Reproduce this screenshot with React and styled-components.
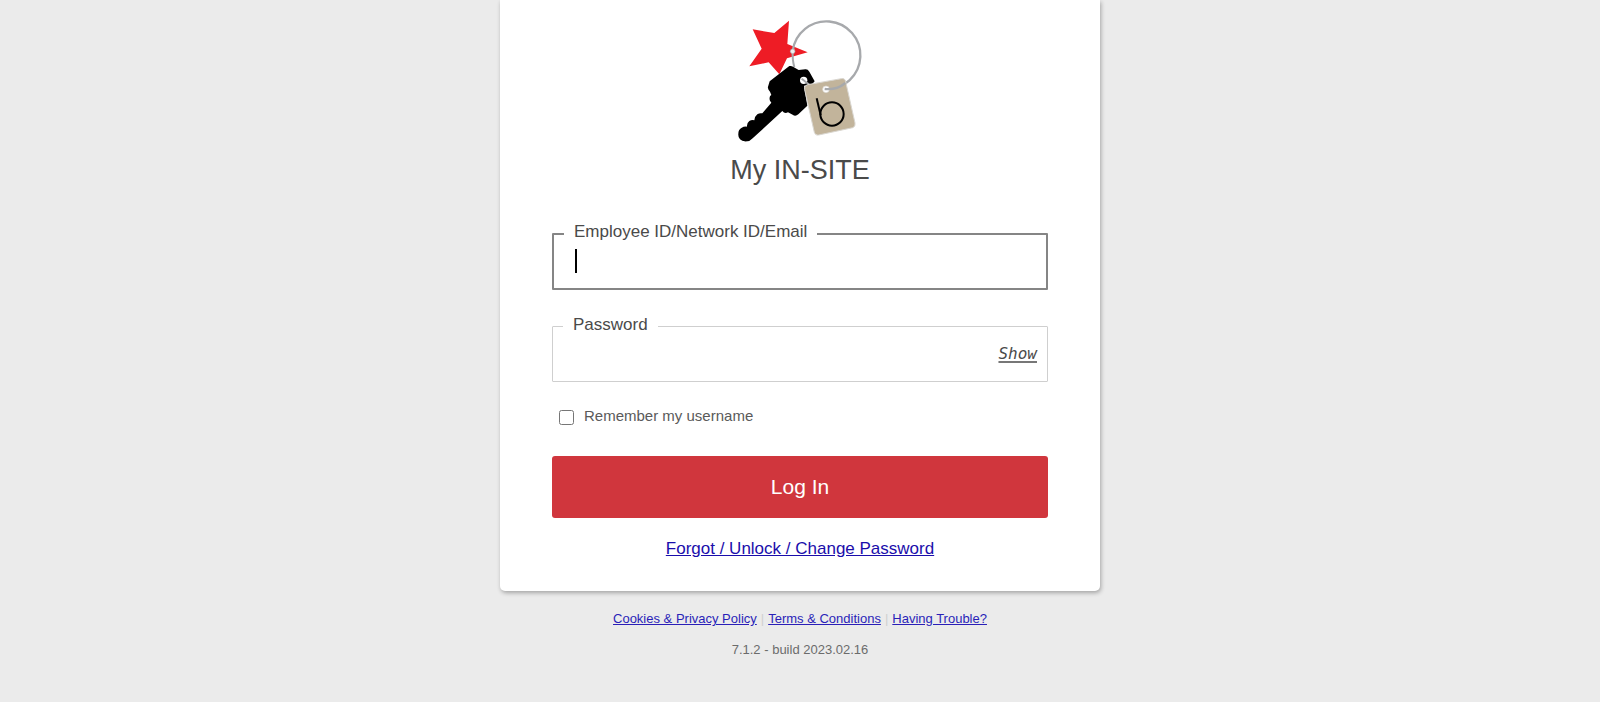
import React, { useState } from "react";
import styled, { createGlobalStyle } from "styled-components";

const GlobalStyle = createGlobalStyle`
  * {
    box-sizing: border-box;
  }
  body {
    margin: 0;
    background: #ebebeb;
    font-family: Arial, "Liberation Sans", sans-serif;
    color: #4a4a4a;
  }
`;

const footerLinks = ["Cookies & Privacy Policy", "Terms & Conditions", "Having Trouble?"];

function KeyringLogo() {
  return (
    <svg width="130" height="126" viewBox="45 53 390 378" role="img" aria-label="Star, key and tag on a key ring">
      <path
        d="M207 61 L202 131 L263 156 L201 174 L178 222 L146 186 L88 198 L125 145 L98 87 L163 98 Z"
        fill="#ee1c25"
      />
      <path d="M218 152 A102 102 0 1 1 318 267" fill="none" stroke="#a7a9ac" strokeWidth="7" />
      <path d="M218 152 Q217 180 223 200" fill="none" stroke="#a7a9ac" strokeWidth="6" />
      <path
        d="M208 197 Q215 196 219 199 L236 209 L256 207 Q263 206 268 214 L284 243 L276 252 L252 256 L262 316 L235 342 Q226 350 218 343 L204 336 Q194 342 187 332 L98 414 Q88 424 81 423 Q66 424 60 417 Q54 411 55 400 Q55 388 64 383 Q72 378 81 379 Q80 368 88 362 Q95 358 103 360 Q104 348 112 342 Q119 337 127 339 L154 307 Q147 300 149 293 Q148 287 154 284 L150 274 Q142 266 144 259 L149 243 Z"
        fill="#000"
      />
      <circle cx="251" cy="240" r="11" fill="#fff" />
      <path d="M245 235 L268 253" fill="none" stroke="#a7a9ac" strokeWidth="6" />
      <path
        d="M263 253 L364 235 Q375 233 377 244 L405 368 Q407 379 398 382 L296 404 Q286 406 283 396 L254 268 Q252 256 263 253 Z"
        fill="#c2b49b"
        stroke="#d9d6d0"
        strokeWidth="3"
      />
      <circle cx="318" cy="267" r="10" fill="#fff" stroke="#d9d6d0" strokeWidth="2" />
      <path d="M314 266 Q350 270 376 248" fill="none" stroke="#a7a9ac" strokeWidth="7" />
      <path d="M290 294 L302 345" fill="none" stroke="#000" strokeWidth="6" />
      <circle cx="336" cy="341" r="35" fill="none" stroke="#000" strokeWidth="6" />
      <circle cx="218" cy="153" r="7" fill="#eee" stroke="#a7a9ac" strokeWidth="2" />
    </svg>
  );
}

export default function App() {
  const [visible, setVisible] = useState(false);
  return (
    <>
      <GlobalStyle />
      <Page>
        <Card>
          <KeyringLogo />
          <Title>My IN-SITE</Title>
          <Form onSubmit={(e) => e.preventDefault()}>
            <Field $active>
              <Legend>
                <label htmlFor="user">Employee ID/Network ID/Email</label>
              </Legend>
              <FieldRow>
                <Caret />
                <Input id="user" type="text" />
              </FieldRow>
            </Field>
            <Field>
              <Legend>
                <label htmlFor="password">Password</label>
              </Legend>
              <FieldRow>
                <Input id="password" type={visible ? "text" : "password"} />
                <ShowButton type="button" onClick={() => setVisible(!visible)}>
                  Show
                </ShowButton>
              </FieldRow>
            </Field>
            <Remember>
              <input id="remember" type="checkbox" />
              <label htmlFor="remember">Remember my username</label>
            </Remember>
            <LoginButton type="submit">Log In</LoginButton>
          </Form>
          <ForgotLink href="#forgot">Forgot / Unlock / Change Password</ForgotLink>
        </Card>
        <Footer>
          <FooterLinks>
            {footerLinks.map((text) => (
              <li key={text}>
                <a href="#info">{text}</a>
              </li>
            ))}
          </FooterLinks>
          <p>7.1.2 - build 2023.02.16</p>
        </Footer>
      </Page>
    </>
  );
}

const Page = styled.main`
  display: flex;
  flex-direction: column;
  align-items: center;
  min-height: 100vh;
`;

const Card = styled.section`
  display: flex;
  flex-direction: column;
  align-items: center;
  width: min(600px, 100%);
  padding: 18px 52px 31px;
  background: #fff;
  border-radius: 0 0 5px 5px;
  box-shadow: 1px 2px 4px rgba(0, 0, 0, 0.3);
`;

const Title = styled.h1`
  margin: 10px 0 0;
  font-size: 27px;
  font-weight: 400;
  line-height: 32px;
`;

const Form = styled.form`
  display: flex;
  flex-direction: column;
  width: 100%;
  margin-top: 36px;
`;

const Field = styled.fieldset`
  min-width: 0;
  margin: 0 0 25px;
  padding: 0 10px;
  border: ${(p) => (p.$active ? "2px solid #858585" : "1px solid #cfcfcf")};
  border-radius: 1px;
`;

const Legend = styled.legend`
  padding: 0 10px 3px;
  font-size: 17px;
  line-height: 20px;
`;

const FieldRow = styled.div`
  display: flex;
  align-items: center;
  height: 43px;
`;

const Caret = styled.span`
  width: 2px;
  height: 24px;
  margin: 0 0 11px 11px;
  background: #000;
`;

const Input = styled.input`
  flex: 1;
  min-width: 0;
  height: 100%;
  padding: 0 10px;
  border: 0;
  outline: 0;
  background: transparent;
  font: inherit;
  font-size: 17px;
`;

const ShowButton = styled.button`
  padding: 0 0 11px;
  border: 0;
  background: none;
  color: #4a4a4a;
  font: italic 16px/18px "DejaVu Sans Mono", monospace;
  text-decoration: underline 2px #777;
  text-underline-offset: 2px;
  cursor: pointer;
`;

const Remember = styled.div`
  display: flex;
  gap: 10px;
  font-size: 15px;
  line-height: 18px;
  color: #5a5a5a;
  & > input {
    width: 15px;
    height: 15px;
    margin: 3px 0 0 7px;
  }
`;

const LoginButton = styled.button`
  height: 62px;
  margin-top: 31px;
  border: 0;
  border-radius: 3px;
  background: #d0363d;
  color: #fff;
  font: inherit;
  font-size: 21px;
  cursor: pointer;
`;

const ForgotLink = styled.a`
  margin-top: 20px;
  font-size: 17px;
  line-height: 22px;
  color: #1a0dab;
`;

const Footer = styled.footer`
  padding: 18px 20px;
  font-size: 13px;
  line-height: 20px;
  text-align: center;
  color: #6b6b6b;
  & > p {
    margin: 11px 0 0;
  }
`;

const FooterLinks = styled.ul`
  display: flex;
  flex-wrap: wrap;
  justify-content: center;
  margin: 0;
  padding: 0;
  list-style: none;
  & a {
    color: #2a1fb8;
  }
  & > li + li::before {
    content: "|";
    padding: 0 4px;
    color: #cfcfcf;
  }
`;
